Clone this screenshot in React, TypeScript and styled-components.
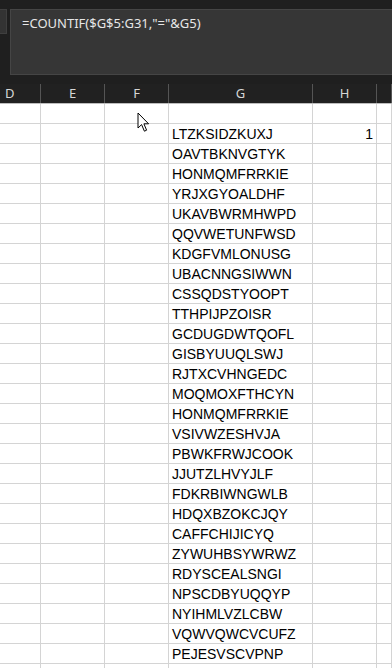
import React from "react";
import styled, { createGlobalStyle } from "styled-components";

const GlobalStyle = createGlobalStyle`
	html, body {
		margin: 0;
		padding: 0;
		background: #ffffff;
		overflow: hidden;
	}
	* {
		box-sizing: border-box;
	}
`;

const names = [
	"LTZKSIDZKUXJ",
	"OAVTBKNVGTYK",
	"HONMQMFRRKIE",
	"YRJXGYOALDHF",
	"UKAVBWRMHWPD",
	"QQVWETUNFWSD",
	"KDGFVMLONUSG",
	"UBACNNGSIWWN",
	"CSSQDSTYOOPT",
	"TTHPIJPZOISR",
	"GCDUGDWTQOFL",
	"GISBYUUQLSWJ",
	"RJTXCVHNGEDC",
	"MOQMOXFTHCYN",
	"HONMQMFRRKIE",
	"VSIVWZESHVJA",
	"PBWKFRWJCOOK",
	"JJUTZLHVYJLF",
	"FDKRBIWNGWLB",
	"HDQXBZOKCJQY",
	"CAFFCHIJICYQ",
	"ZYWUHBSYWRWZ",
	"RDYSCEALSNGI",
	"NPSCDBYUQQYP",
	"NYIHMLVZLCBW",
	"VQWVQWCVCUFZ",
	"PEJESVSCVPNP",
];

const columns = ["D", "E", "F", "G", "H", ""];
const colTemplate = "41px 64px 64px 144px 64px 1fr";

const Page = styled.div`
	position: relative;
	width: 392px;
	height: 668px;
	overflow: hidden;
	background: #ffffff;
`;

const TopBar = styled.div`
	display: flex;
	gap: 3px;
	height: 84px;
	padding-top: 9px;
	background: #1f1f1f;
`;

const NameBox = styled.div`
	width: 7px;
	height: 25px;
	background: #333333;
	border: 1px solid #3f3f3f;
	border-left: none;
`;

const FormulaBox = styled.div`
	flex: 1;
	height: 66px;
	margin-right: -4px;
	padding: 3px 0 0 11px;
	background: #363636;
	border: 1px solid #454545;
	color: #e6e6e6;
	font-family: "Noto Sans", "Open Sans", sans-serif;
	font-size: 13px;
	line-height: 20px;
`;

const HeaderRow = styled.div`
	display: grid;
	grid-template-columns: ${colTemplate};
	height: 20px;
	background: #212121;
	border-bottom: 1px solid #bdbdbd;
`;

const HeaderCell = styled.div<{ $align: "left" | "center" }>`
	display: flex;
	align-items: center;
	justify-content: ${(p) => (p.$align === "left" ? "flex-start" : "center")};
	padding-left: ${(p) => (p.$align === "left" ? "5px" : "0")};
	border-right: 1px solid #555555;
	color: #d6d6d6;
	font-family: "Noto Sans", "Open Sans", sans-serif;
	font-size: 13px;
	line-height: 1;
`;

const Row = styled.div`
	display: grid;
	grid-template-columns: ${colTemplate};
	height: 20px;
`;

const Cell = styled.div<{ $align?: "left" | "right" }>`
	height: 20px;
	padding: 2px 3px 0 3px;
	border-right: 1px solid #d4d4d4;
	border-bottom: 1px solid #d4d4d4;
	text-align: ${(p) => (p.$align === "right" ? "right" : "left")};
	color: #000000;
	font-family: "Liberation Sans", Arial, sans-serif;
	font-size: 14px;
	line-height: 17px;
	white-space: nowrap;
	overflow: hidden;
`;

const Cursor = styled.svg`
	position: absolute;
	left: 137px;
	top: 112px;
	pointer-events: none;
`;

const ArrowCursor = () => (
	<Cursor width="14" height="21" viewBox="0 0 14 21">
		<path
			d="M1 1 L1 16 L4.6 12.6 L7.4 19.2 L9.6 18.2 L6.9 11.8 L11.6 11.8 Z"
			fill="#ffffff"
			stroke="#000000"
			strokeWidth="1"
			strokeLinejoin="miter"
		/>
	</Cursor>
);

const App = () => {
	const rows: (string | null)[] = [null, ...names, null];

	return (
		<Page>
			<GlobalStyle />
			<TopBar>
				<NameBox />
				<FormulaBox>=COUNTIF($G$5:G31,"="&amp;G5)</FormulaBox>
			</TopBar>
			<HeaderRow>
				{columns.map((c, i) => (
					<HeaderCell key={i} $align={i === 0 ? "left" : "center"}>
						{c}
					</HeaderCell>
				))}
			</HeaderRow>
			{rows.map((name, r) => (
				<Row key={r}>
					<Cell />
					<Cell />
					<Cell />
					<Cell>{name}</Cell>
					<Cell $align="right">{r === 1 ? "1" : ""}</Cell>
					<Cell />
				</Row>
			))}
			<ArrowCursor />
		</Page>
	);
};

export default App;
